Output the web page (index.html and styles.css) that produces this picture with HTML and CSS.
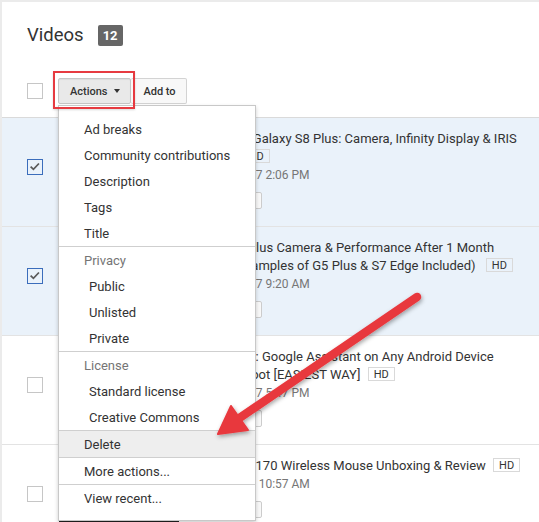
FILE: index.html
```html
<!DOCTYPE html>
<html>
<head>
<meta charset="utf-8">
<link rel="stylesheet" href="styles.css">
</head>
<body>
  <header class="head">
    <h1 class="heading">Videos</h1>
    <span class="count">12</span>
  </header>

  <div class="toolbar">
    <span class="cb"></span>
    <button class="btn btn-act">Actions<span class="caret"></span></button>
    <button class="btn btn-add">Add to</button>
  </div>

  <ul class="list">
    <li class="row sel">
      <span class="cb checked"><svg viewBox="0 0 16 16" width="14" height="14"><polyline points="3,7.5 6.2,10.7 12.5,4" fill="none" stroke="#5a5a5a" stroke-width="2"/></svg></span>
      <div class="thumb"></div>
      <div class="info">
        <div class="vtitle">Samsung Galaxy S8 Plus: Camera, Infinity Display &amp; IRIS Sensor <span class="hd">HD</span></div>
        <div class="date">Apr 21, 2017 2:06 PM</div>
        <button class="rbtn">Edit</button>
      </div>
    </li>
    <li class="row sel">
      <span class="cb checked"><svg viewBox="0 0 16 16" width="14" height="14"><polyline points="3,7.5 6.2,10.7 12.5,4" fill="none" stroke="#5a5a5a" stroke-width="2"/></svg></span>
      <div class="thumb"></div>
      <div class="info">
        <div class="vtitle">Moto G5 Plus Camera &amp; Performance After 1 Month Review (Samples of G5 Plus &amp; S7 Edge Included) <span class="hd hd-wide">HD</span></div>
        <div class="date">Apr 18, 2017 9:20 AM</div>
        <button class="rbtn">Edit</button>
      </div>
    </li>
    <li class="row">
      <span class="cb"></span>
      <div class="thumb"></div>
      <div class="info">
        <div class="vtitle">Quick Tips: Google Assistant on Any Android Device Without Root [EASIEST WAY] <span class="hd">HD</span></div>
        <div class="date">Apr 14, 2017 5:47 PM</div>
        <button class="rbtn">Edit</button>
      </div>
    </li>
    <li class="row">
      <span class="cb"></span>
      <div class="thumb"></div>
      <div class="info">
        <div class="vtitle vtitle-pull">Logitech M170 Wireless Mouse Unboxing &amp; Review <span class="hd">HD</span></div>
        <div class="date">Apr 6, 2017 10:57 AM</div>
        <button class="rbtn">Edit</button>
      </div>
    </li>
  </ul>

  <div class="menu">
    <div class="mi">Ad breaks</div>
    <div class="mi">Community contributions</div>
    <div class="mi">Description</div>
    <div class="mi">Tags</div>
    <div class="mi">Title</div>
    <div class="sep"></div>
    <div class="mi hdr">Privacy</div>
    <div class="mi sub">Public</div>
    <div class="mi sub">Unlisted</div>
    <div class="mi sub">Private</div>
    <div class="sep"></div>
    <div class="mi hdr">License</div>
    <div class="mi sub">Standard license</div>
    <div class="mi sub">Creative Commons</div>
    <div class="sep"></div>
    <div class="mi hot">Delete</div>
    <div class="sep"></div>
    <div class="mi">More actions...</div>
    <div class="sep"></div>
    <div class="mi">View recent...</div>
  </div>

  <div class="highlight"></div>

  <svg class="arrow" viewBox="0 0 539 522" width="539" height="522">
    <defs>
      <filter id="sh" x="-20%" y="-20%" width="140%" height="140%">
        <feDropShadow dx="1" dy="2" stdDeviation="2" flood-color="#000" flood-opacity="0.35"/>
      </filter>
    </defs>
    <g filter="url(#sh)" fill="#e8383e" stroke="#e8383e">
      <line x1="417" y1="297" x2="238" y2="419" stroke-width="8.5" stroke-linecap="round"/>
      <polygon points="218,434 231,406 248,430" stroke-width="2" stroke-linejoin="round"/>
    </g>
  </svg>
</body>
</html>
```

FILE: styles.css
```css
html {
  overflow: hidden;
}

body {
  margin: 0;
  height: 520px;
  overflow: hidden;
  background: #fff;
  color: #333;
  font-family: Roboto, "Liberation Sans", sans-serif;
  border-top: 2px solid #ebebeb;
  border-left: 2px solid #ebebeb;
}

.head {
  display: flex;
  align-items: center;
  gap: 14px;
  padding: 23px 0 0 25px;
}

.heading {
  margin: 0;
  font-size: 18.5px;
  font-weight: 400;
  line-height: 21px;
  color: #333;
}

.count {
  display: inline-block;
  width: 25px;
  height: 21px;
  line-height: 21px;
  text-align: center;
  background: #666;
  color: #fff;
  font-size: 13px;
  font-weight: 700;
  border-radius: 2px;
}

.toolbar {
  display: flex;
  align-items: center;
  height: 26px;
  margin-top: 32px;
  padding-left: 25px;
}

.cb {
  display: flex;
  align-items: center;
  justify-content: center;
  flex: none;
  width: 16px;
  height: 16px;
  box-sizing: border-box;
  border: 1px solid #c6c6c6;
  background: #fff;
}

.cb.checked {
  border-color: #3b6dbb;
  background: transparent;
}

.btn {
  height: 26px;
  box-sizing: border-box;
  margin: 0;
  font-family: Roboto, "Liberation Sans", sans-serif;
  font-size: 11px;
  font-weight: 500;
  color: #333;
  border: 1px solid #d3d3d3;
  background: #f8f8f8;
  border-radius: 2px;
  padding: 0;
}

.btn-act {
  display: flex;
  align-items: center;
  margin-left: 15px;
  width: 73px;
  padding-left: 11px;
  background: #e9e9e9;
  border-color: #c6c6c6;
  box-shadow: inset 0 1px 1px rgba(0, 0, 0, 0.06);
}

.caret {
  margin-left: 6px;
  width: 0;
  height: 0;
  border-left: 3.5px solid transparent;
  border-right: 3.5px solid transparent;
  border-top: 4px solid #333;
}

.btn-add {
  width: 56px;
  border-left: none;
  padding-left: 2px;
}

.list {
  list-style: none;
  margin: 13px 0 0;
  padding: 0;
}

.row {
  display: flex;
  align-items: flex-start;
  height: 109px;
  box-sizing: border-box;
  padding: 12px 0 0 25px;
  border-top: 1px solid #e3e3e3;
}

.row:first-child {
  border-top-color: #dadada;
}

.row.sel {
  background: #eaf2fa;
}

.row > .cb {
  margin-top: 29px;
}

.thumb {
  flex: none;
  width: 120px;
  height: 68px;
  margin-left: 16px;
  background: #222;
}

.info {
  flex: none;
  width: 335px;
  margin-left: 16px;
}

.vtitle {
  font-size: 13px;
  line-height: 18px;
  color: #333;
}

.vtitle-pull {
  text-indent: -4px;
}

.hd {
  display: inline-block;
  margin-left: 4px;
  padding: 0 5px;
  height: 14px;
  line-height: 13px;
  box-sizing: border-box;
  border: 1px solid #d9d9d9;
  font-size: 11px;
  vertical-align: 1px;
  color: #333;
  text-indent: 0;
}

.hd-wide {
  margin-left: 7px;
}

.date {
  font-size: 12px;
  line-height: 18px;
  color: #767676;
}

.rbtn {
  display: block;
  margin-top: 8px;
  width: 67px;
  height: 17px;
  box-sizing: border-box;
  border: 1px solid #ccc;
  border-radius: 2px;
  background: #f8f8f8;
  font-size: 11px;
  color: #333;
  padding: 0;
}

.menu {
  position: absolute;
  left: 58px;
  top: 105px;
  width: 198px;
  height: 416px;
  box-sizing: border-box;
  padding: 10px 0 9px;
  background: #fff;
  border: 1px solid #c8c8c8;
  box-shadow: 0 2px 4px rgba(0, 0, 0, 0.2);
  font-size: 13px;
  color: #333;
}

.mi {
  height: 26px;
  line-height: 28px;
  padding-left: 25px;
  white-space: nowrap;
}

.mi.sub {
  padding-left: 30px;
}

.mi.hdr {
  color: #757575;
}

.mi.hot {
  background: #eee;
}

.sep {
  height: 1px;
  background: #cfcfcf;
}

.highlight {
  position: absolute;
  left: 53px;
  top: 71px;
  width: 82px;
  height: 38px;
  box-sizing: border-box;
  border: 2px solid #e63a40;
  box-shadow: 0 1px 2px rgba(0, 0, 0, 0.15);
}

.arrow {
  position: absolute;
  left: 0;
  top: 0;
  pointer-events: none;
}
```
